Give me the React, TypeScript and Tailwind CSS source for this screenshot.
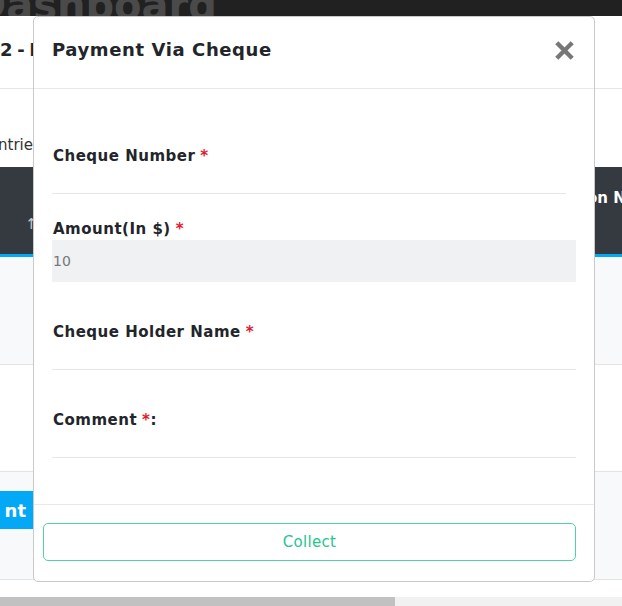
import React from "react";

const Req = () => <span className="text-[#e3182d] ml-[5px]">*</span>;

const labelCls = "h-[22px] leading-[22px] pl-px text-[15px] font-bold text-[#22252a] tracking-[0.5px]";

const ChequeModal = () => {
  return (
    <div className="absolute left-[33px] top-[16px] w-[562px] h-[566px] bg-white border border-[#c9c9c9] rounded-[5px] flex flex-col">
      {/* header */}
      <div className="h-[72px] shrink-0 flex items-center justify-between pl-[18px] pr-[20px] border-b border-[#e9e9e9]">
        <h2 className="text-[18px] font-bold text-[#22252a] tracking-[0.6px] -mt-[6px]">Payment Via Cheque</h2>
        <svg width="19" height="19" viewBox="0 0 20 20" className="-mt-[4px]">
          <path d="M3.5 3.5 L16.5 16.5 M16.5 3.5 L3.5 16.5" stroke="#777" strokeWidth="4.6" strokeLinecap="square" />
        </svg>
      </div>

      {/* body */}
      <div className="flex-1 pt-[56px] pl-[18px] pr-[18px] flex flex-col">
        <label className={labelCls}>
          Cheque Number<Req />
        </label>
        <div className="h-[27px] border-b border-[#e6e6e6] mr-[10px]" />

        <label className={"mt-[24px] " + labelCls}>
          Amount(In $)<Req />
        </label>
        <div className="h-[42px] bg-[#f0f1f3] flex items-center pl-px text-[14px] text-[#777]">10</div>

        <label className={"mt-[39px] " + labelCls}>
          Cheque Holder Name<Req />
        </label>
        <div className="h-[27px] border-b border-[#e6e6e6]" />

        <label className={"mt-[39px] " + labelCls}>
          Comment<Req />:
        </label>
        <div className="h-[27px] border-b border-[#e6e6e6]" />
      </div>

      {/* footer */}
      <div className="h-[77px] shrink-0 border-t border-[#e9e9e9] pt-[18px] pl-[9px] pr-[18px]">
        <button className="w-full h-[38px] rounded-[5px] border border-[#4fd3a6] text-[#28c48e] text-[15px] tracking-[0.3px]">
          Collect
        </button>
      </div>
    </div>
  );
};

export default function App() {
  return (
    <div className="relative w-[622px] h-[606px] overflow-hidden bg-white font-['DejaVu_Sans',sans-serif]">
      {/* page behind */}
      <div className="h-[16px] bg-[#212121] overflow-hidden">
        <div className="-ml-[27px] -mt-[15px] text-[40px] leading-[40px] font-bold text-[#4a4a4a]">Dashboard</div>
      </div>
      <div className="h-[73px] border-b border-[#e6e6e6] flex items-center">
        <span className="text-[18px] font-bold text-[#22252a] tracking-[-0.8px] -mt-[6px]">2 - Pending Payments</span>
      </div>
      <div className="h-[78px] pt-[45px]">
        <span className="block -ml-[2px] text-[15px] leading-[22px] text-[#333]">ntries</span>
      </div>
      <div className="h-[90px] bg-[#343a40] border-b-[3px] border-[#03a9f4] flex justify-between text-white font-bold text-[15px]">
        <span className="ml-[25px] mt-[46px] text-[#c8ccd0] font-normal">↑</span>
        <span className="mt-[20px] -mr-[14px]">ion No</span>
      </div>
      <div className="h-[108px] bg-[#f8f9fa] border-b border-[#e3e3e3]" />
      <div className="h-[107px] bg-white border-b border-[#e3e3e3]" />
      <div className="h-[108px] bg-[#f8f9fa] border-b border-[#e3e3e3] pt-[19px]">
        <div className="w-[33px] h-[38px] bg-[#03a9f4] text-white font-bold text-[18px] flex items-center justify-end overflow-hidden">
          <span className="pr-[7px]">nt</span>
        </div>
      </div>
      <div className="h-[17px]" />
      <div className="h-[10px] bg-[#f1f1f1]">
        <div className="h-full w-[395px] bg-[#c1c1c1]" />
      </div>

      <ChequeModal />
    </div>
  );
}
